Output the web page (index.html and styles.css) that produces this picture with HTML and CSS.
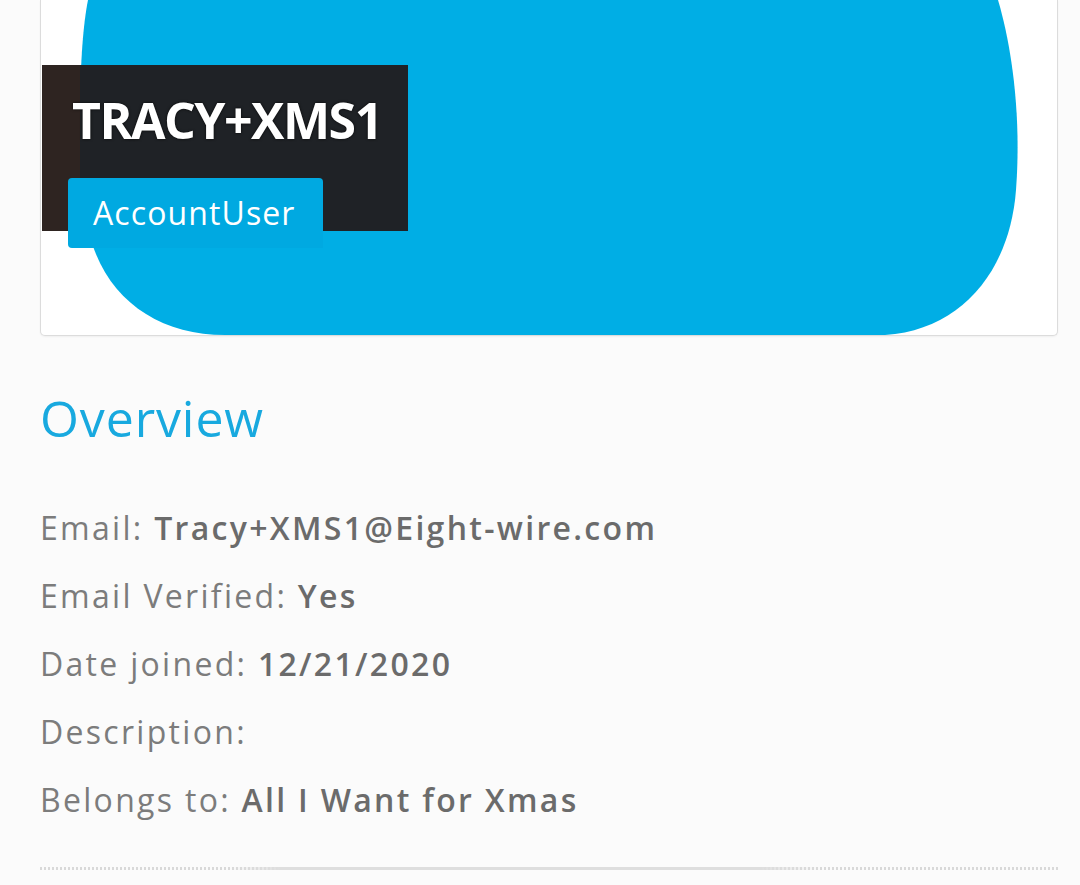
FILE: index.html
```html
<!DOCTYPE html>
<html>
<head>
<meta charset="utf-8">
<link rel="stylesheet" href="styles.css">
</head>
<body>
<div class="page">
  <div class="card">
    <svg class="avatar" viewBox="41 0 1016 335" preserveAspectRatio="none" xmlns="http://www.w3.org/2000/svg">
      <path d="M 88 0 C 80 40, 77 120, 85 210 C 94 290, 150 335, 225 335 L 885 335 C 962 330, 1010 270, 1016 190 C 1022 110, 1010 40, 998 0 Z" fill="#00aee5"/>
    </svg>
    <div class="label">
      <div class="name">TRACY+XMS1</div>
      <div class="role">AccountUser</div>
    </div>
  </div>
  <h2 class="heading">Overview</h2>
  <div class="info">
    <div class="row">Email: <b>Tracy+XMS1@Eight-wire.com</b></div>
    <div class="row">Email Verified: <b>Yes</b></div>
    <div class="row">Date joined: <b>12/21/2020</b></div>
    <div class="row">Description:</div>
    <div class="row">Belongs to: <b>All I Want for Xmas</b></div>
  </div>
  <div class="divider"></div>
</div>
</body>
</html>
```
FILE: styles.css
```css
html, body {
  margin: 0;
  padding: 0;
  background: #fbfbfb;
  font-family: "Open Sans", "Liberation Sans", sans-serif;
  overflow: hidden;
}
.page {
  padding: 0 22px 0 40px;
}
.card {
  position: relative;
  height: 335px;
  background: #fff;
  border: 1px solid #dcdcdc;
  border-top: 0;
  border-radius: 0 0 5px 5px;
  box-shadow: 0 1px 2px rgba(0,0,0,0.05);
}
.avatar {
  display: block;
  width: 100%;
  height: 335px;
}
.label {
  position: absolute;
  left: 1px;
  top: 65px;
  width: 340px;
  padding: 25px 0 0 26px;
  background: linear-gradient(90deg, #2e2421 0, #2e2421 38px, #1f2226 38px, #1f2226 100%);
}
.name {
  margin-left: 4px;
  font-size: 50px;
  line-height: 60px;
  font-weight: 700;
  letter-spacing: -1.5px;
  color: #fff;
  text-shadow: 0 0 3px rgba(0,0,0,0.85);
}
.role {
  display: inline-block;
  margin: 28px 0 -17px 0;
  padding: 0 27px 0 25px;
  height: 70px;
  line-height: 70px;
  font-size: 32px;
  letter-spacing: 1.1px;
  color: #fff;
  background: #00a9e1;
  border-radius: 4px 4px 0 4px;
}
.heading {
  margin: 52px 0 0 0;
  font-size: 50px;
  line-height: 60px;
  font-weight: 400;
  letter-spacing: 0.9px;
  color: #18a9df;
}
.info {
  margin-top: 46px;
}
.row {
  font-size: 32px;
  line-height: 68px;
  letter-spacing: 2.3px;
  color: #7c7c7c;
}
.row b {
  font-weight: 600;
  color: #6b6b6b;
}
.divider {
  margin-top: 33px;
  height: 3px;
  background:
    linear-gradient(90deg, transparent 0, transparent 190px, #dedede 240px, #dedede 720px, transparent 780px, transparent 100%),
    repeating-linear-gradient(90deg, #d9d9d9 0, #d9d9d9 2px, transparent 2px, transparent 4px);
}
```
